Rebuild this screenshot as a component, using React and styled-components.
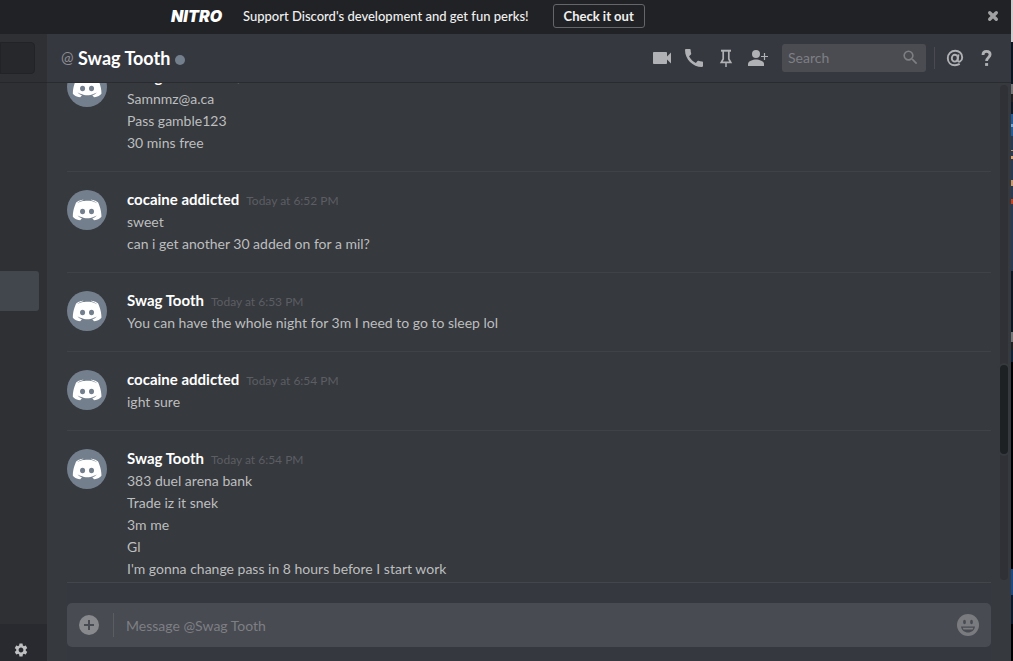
import React from "react";
import styled, { createGlobalStyle } from "styled-components";
import { MdVideocam, MdCall, MdSearch, MdSettings } from "react-icons/md";

const GlobalStyle = createGlobalStyle`
  *, *::before, *::after { box-sizing: border-box; }
  body {
    margin: 0;
    background: #000;
    color: #fff;
    font-family: Lato, "Noto Sans", sans-serif;
    font-size: 14px;
  }
  button, input { font: inherit; color: inherit; }
  h1, h2, p { margin: 0; }
`;

const Screen = styled.div`
  display: grid;
  grid-template-columns: minmax(0, 1fr) 2px;
  height: 100vh;
`;

const AppWindow = styled.div`
  display: flex;
  flex-direction: column;
  min-width: 0;
  min-height: 0;
`;

const DesktopEdge = styled.div`
  background: linear-gradient(
    #cfcfcf 0 42px, #0a1622 42px 84px, #777 84px 94px, #202020 94px 102px,
    #0d1a26 102px 114px, #1f5c9e 114px 124px, #6fa8dc 124px 127px,
    #1f5c9e 127px 136px, #263a54 136px 150px, #c99a6b 150px 151px,
    #263a54 151px 156px, #e0a060 156px 159px, #263a54 159px 180px,
    #c99a6b 180px 186px, #263a54 186px 199px, #c8401c 199px 204px,
    #263a54 204px 271px, #0c1722 271px 332px, #777 332px 342px,
    #202020 342px 350px, #0e2238 350px 362px, #000 362px 569px,
    #164a88 569px 595px, #0a1a2c 595px 624px, #000 624px
  );
`;

const Banner = styled.div`
  display: flex;
  align-items: center;
  flex: none;
  height: 34px;
  padding: 0 12px 2px 171px;
  background: #212225;
  color: #f0f0f0;
  font-size: 13px;
  font-weight: 500;
`;

const NitroMark = styled.span`
  width: 72px;
  font-family: Inter, sans-serif;
  font-size: 16px;
  font-style: italic;
  font-weight: 900;
  color: #fff;
`;

const BannerButton = styled.button`
  height: 24px;
  margin-left: 24px;
  padding: 0 10px;
  border: 1px solid #65666a;
  border-radius: 3px;
  background: none;
  font-weight: 700;
  line-height: 20px;
`;

const IconButton = styled.button`
  display: flex;
  align-items: center;
  justify-content: center;
  flex: none;
  width: ${(p) => p.$size || 24}px;
  height: ${(p) => p.$size || 24}px;
  padding: 0;
  border: 0;
  background: none;
  color: ${(p) => p.$color || "#b0b1b4"};
  cursor: pointer;
  svg { display: block; flex: none; }
`;

const CloseButton = styled(IconButton)`
  margin-left: auto;
  width: 12px;
`;

const Body = styled.div`
  display: flex;
  flex: 1;
  min-height: 0;
`;

const Sidebar = styled.aside`
  display: flex;
  flex-direction: column;
  flex: none;
  width: 47px;
  background: #2f3034;
`;

const SidebarTop = styled.div`
  height: 49px;
  padding-top: 8px;
  border-bottom: 1px solid #26272a;
`;

const FindField = styled.input`
  display: block;
  width: 35px;
  height: 32px;
  border: 1px solid #222327;
  border-radius: 0 4px 4px 0;
  background: #27282c;
`;

const DirectList = styled.nav`
  flex: 1;
  padding-top: 188px;
`;

const DirectLink = styled.a`
  display: block;
  width: 39px;
  height: 40px;
  border-radius: 0 3px 3px 0;
  background: #42464d;
`;

const AccountPanel = styled.div`
  display: flex;
  flex: none;
  height: 37px;
  padding: 14px 0 0 9px;
  background: #292a2f;
`;

const Main = styled.main`
  display: flex;
  flex-direction: column;
  flex: 1;
  min-width: 0;
  background: #36393e;
`;

const Header = styled.header`
  display: flex;
  align-items: center;
  flex: none;
  height: 49px;
  padding: 0 12px 1px 14px;
  background: #363840;
  border-bottom: 1px solid #292b2f;
`;

const AtSign = styled.span`
  width: 17px;
  padding-bottom: 2px;
  color: #8c8d92;
  font-size: 15px;
`;

const Title = styled.h1`
  font-size: 18px;
  font-weight: 700;
  line-height: 24px;
`;

const StatusDot = styled.span`
  width: 10px;
  height: 10px;
  margin: 4px 0 0 5px;
  border-radius: 50%;
  background: #747f8d;
`;

const Tools = styled.div`
  display: flex;
  align-items: center;
  gap: 8px;
  margin-left: auto;
`;

const SearchBox = styled.label`
  display: flex;
  align-items: center;
  width: 144px;
  height: 28px;
  margin-left: 4px;
  padding: 0 6px;
  border-radius: 3px;
  background: #4b4c51;
  color: #7e7f83;
`;

const TextField = styled.input`
  flex: 1;
  min-width: 0;
  padding: 0;
  border: 0;
  outline: 0;
  background: none;
  &::placeholder { color: #7e7f84; opacity: 1; }
`;

const Rule = styled.span`
  flex: none;
  width: 1px;
  height: ${(p) => p.$height}px;
  background: ${(p) => p.$color};
`;

const Conversation = styled.div`
  display: grid;
  grid-template-columns: minmax(0, 1fr) 8px;
  column-gap: 9px;
  flex: 1;
  min-height: 0;
  padding: 0 3px 0 20px;
`;

const MessageList = styled.div`
  display: flex;
  flex-direction: column;
  justify-content: flex-end;
  min-height: 0;
  overflow: hidden;
`;

const Group = styled.article`
  display: flex;
  flex: none;
  gap: 20px;
  padding: 17px 0;
  border-bottom: 1px solid #3f4247;
  &:last-child { padding-bottom: 2px; border-bottom: 0; }
`;

const Avatar = styled.span`
  flex: none;
  width: 40px;
  height: 40px;
  margin-top: 1px;
  border-radius: 50%;
  background: #747f8d;
  svg { display: block; }
`;

const GroupHead = styled.div`
  display: flex;
  align-items: baseline;
  gap: 7px;
  height: 22px;
  line-height: 20px;
`;

const Author = styled.h2`
  font-size: 15px;
  font-weight: 700;
`;

const Timestamp = styled.time`
  color: #5c5e63;
  font-size: 12px;
`;

const Line = styled.p`
  color: #bdbebf;
  line-height: 22px;
`;

const ScrollTrack = styled.div`
  display: flex;
  flex-direction: column;
  margin: 2px 0;
  border-radius: 4px;
  background: #2f3136;
`;

const ScrollSpace = styled.span`
  flex: ${(p) => p.$share};
`;

const ScrollThumb = styled.span`
  flex: 90;
  margin: 0 -2px;
  border: 2px solid #36393e;
  border-radius: 6px;
  background: #1e2124;
`;

const Composer = styled.form`
  flex: none;
  margin: 0 20px;
  padding: 20px 0 14px;
  border-top: 1px solid #43464b;
  background: #363840;
`;

const ComposerBox = styled.div`
  display: flex;
  align-items: center;
  height: 44px;
  padding: 0 12px;
  border-radius: 5px;
  background: #484b52;
`;

const ComposerRule = styled(Rule)`
  margin: 0 12px 0 14px;
`;

const Clyde = () => (
  <Avatar>
    <svg width="40" height="40" viewBox="41 27 163 163" aria-hidden="true">
      <path
        fill="#fff"
        d="M150.9 150.6s-3.6-4.3-6.6-8.1c13.1-3.7 18.1-11.9 18.1-11.9-4.1 2.7-8 4.6-11.5 5.9-5 2.1-9.8 3.5-14.5 4.3-9.6 1.8-18.4 1.3-25.9-.1-5.7-1.1-10.6-2.7-14.7-4.3-2.3-.9-4.8-2-7.3-3.4-.3-.2-.6-.3-.9-.5-.2-.1-.3-.2-.4-.3-1.8-1-2.8-1.7-2.8-1.7s4.8 8 17.5 11.8c-3 3.8-6.7 8.3-6.7 8.3-22.1-.7-30.5-15.2-30.5-15.2 0-32.2 14.4-58.3 14.4-58.3 14.4-10.8 28.1-10.5 28.1-10.5l1 1.2c-18 5.2-26.3 13.1-26.3 13.1s2.2-1.2 5.9-2.9c10.7-4.7 19.2-6 22.7-6.3.6-.1 1.1-.2 1.7-.2 6.1-.8 13-1 20.2-.2 9.5 1.1 19.7 3.9 30.1 9.6 0 0-7.9-7.5-24.9-12.7l1.4-1.6s13.7-.3 28.1 10.5c0 0 14.4 26.1 14.4 58.3 0 0-8.5 14.5-30.6 15.2z"
      />
      <ellipse cx="104.4" cy="115" rx="10.2" ry="11.1" fill="#747f8d" />
      <ellipse cx="140.9" cy="115" rx="10.2" ry="11.1" fill="#747f8d" />
    </svg>
  </Avatar>
);

const PinIcon = () => (
  <svg width="24" height="24" viewBox="0 0 24 24" fill="none" stroke="currentColor">
    <path d="M7 4.700h10" strokeWidth="2" />
    <path d="M9.200 5v8L7.300 16.300h9.400L14.800 13V5" strokeWidth="1.700" />
    <path d="M12 16v5" strokeWidth="1.500" />
  </svg>
);

const AddPersonIcon = () => (
  <svg width="24" height="24" viewBox="0 0 24 24" fill="currentColor">
    <circle cx="10" cy="8" r="4" />
    <path d="M2 20v-2c0-3 5-4.500 8-4.500s8 1.500 8 4.500v2z" />
    <path d="M15 10.500h7M18.500 7v7" stroke="currentColor" strokeWidth="1.200" />
  </svg>
);

const MentionsIcon = () => (
  <svg width="24" height="24" viewBox="0 0 24 24" fill="none" stroke="currentColor" strokeWidth="1.900">
    <ellipse cx="11.800" cy="12.200" rx="3" ry="3.400" />
    <path d="M15.500 8.300l-.8 5.200c-.2 2.200 1.200 2.500 2.400 1.900 1.400-.7 2.100-2.400 2.100-4C19.200 7.300 16 4.800 12.300 4.800 8 4.800 4.800 8 4.800 12.200c0 4.200 3 7 7.200 7 1.700 0 3.300-.4 4.700-1.300" />
  </svg>
);

const HelpIcon = () => (
  <svg width="24" height="24" viewBox="0 0 24 24" fill="none" stroke="currentColor" strokeWidth="2.800">
    <path d="M8 9c0-2.300 1.400-3.600 3.500-3.600s3.600 1.200 3.600 3.200c0 2.900-3.500 2.900-3.500 6.400" />
    <path d="M10.100 18.500h3" />
  </svg>
);

const CloseIcon = () => (
  <svg width="12" height="12" viewBox="0 0 12 12" stroke="currentColor" strokeWidth="3.400" strokeLinecap="round">
    <path d="M2.700 2.700l6.600 6.600M9.300 2.700L2.700 9.300" />
  </svg>
);

const PlusIcon = () => (
  <svg width="20" height="20" viewBox="0 0 20 20">
    <circle cx="10" cy="10" r="10" fill="currentColor" />
    <path d="M10 5v10M5 10h10" stroke="#484b52" strokeWidth="2" />
  </svg>
);

const SmileIcon = () => (
  <svg width="22" height="22" viewBox="0 0 22 22">
    <circle cx="11" cy="11" r="11" fill="currentColor" />
    <ellipse cx="7.500" cy="8" rx="1.400" ry="2.200" fill="#484b52" />
    <ellipse cx="14.500" cy="8" rx="1.400" ry="2.200" fill="#484b52" />
    <path d="M4 12.500h14c-.5 3.700-3.500 6-7 6s-6.500-2.300-7-6z" fill="#484b52" />
    <path d="M5.600 13.700h10.800l-.8 1.800H6.400z" fill="currentColor" />
  </svg>
);

const groups = [
  { author: "Swag Tooth", time: "Today at 6:52 PM", lines: ["Samnmz@a.ca", "Pass gamble123", "30 mins free"] },
  { author: "cocaine addicted", time: "Today at 6:52 PM", lines: ["sweet", "can i get another 30 added on for a mil?"] },
  { author: "Swag Tooth", time: "Today at 6:53 PM", lines: ["You can have the whole night for 3m I need to go to sleep lol"] },
  { author: "cocaine addicted", time: "Today at 6:54 PM", lines: ["ight sure"] },
  {
    author: "Swag Tooth",
    time: "Today at 6:54 PM",
    lines: ["383 duel arena bank", "Trade iz it snek", "3m me", "Gl", "I'm gonna change pass in 8 hours before I start work"],
  },
];

export default function App() {
  return (
    <>
      <GlobalStyle />
      <Screen>
        <AppWindow>
          <Banner>
            <NitroMark>NITRO</NitroMark>
            <span>Support Discord's development and get fun perks!</span>
            <BannerButton type="button">Check it out</BannerButton>
            <CloseButton type="button" aria-label="Close" $color="#a0a1a3">
              <CloseIcon />
            </CloseButton>
          </Banner>
          <Body>
            <Sidebar>
              <SidebarTop>
                <FindField type="text" aria-label="Find a conversation" />
              </SidebarTop>
              <DirectList aria-label="Direct messages">
                <DirectLink href="#swag-tooth" aria-label="Swag Tooth" />
              </DirectList>
              <AccountPanel>
                <IconButton type="button" aria-label="User settings" $color="#c0c1c3">
                  <MdSettings size={16} />
                </IconButton>
              </AccountPanel>
            </Sidebar>
            <Main>
              <Header>
                <AtSign>@</AtSign>
                <Title>Swag Tooth</Title>
                <StatusDot />
                <Tools>
                  <IconButton type="button" aria-label="Start video call">
                    <MdVideocam size={24} />
                  </IconButton>
                  <IconButton type="button" aria-label="Start voice call">
                    <MdCall size={24} />
                  </IconButton>
                  <IconButton type="button" aria-label="Pinned messages">
                    <PinIcon />
                  </IconButton>
                  <IconButton type="button" aria-label="Add friends to DM">
                    <AddPersonIcon />
                  </IconButton>
                  <SearchBox>
                    <TextField type="text" placeholder="Search" aria-label="Search" />
                    <MdSearch size={19} />
                  </SearchBox>
                  <Rule $height={22} $color="#494b51" />
                  <IconButton type="button" aria-label="Mentions">
                    <MentionsIcon />
                  </IconButton>
                  <IconButton type="button" aria-label="Help">
                    <HelpIcon />
                  </IconButton>
                </Tools>
              </Header>
              <Conversation>
                <MessageList>
                  {groups.map((g, i) => (
                    <Group key={i}>
                      <Clyde />
                      <div>
                        <GroupHead>
                          <Author>{g.author}</Author>
                          <Timestamp>{g.time}</Timestamp>
                        </GroupHead>
                        {g.lines.map((line) => (
                          <Line key={line}>{line}</Line>
                        ))}
                      </div>
                    </Group>
                  ))}
                </MessageList>
                <ScrollTrack aria-hidden="true">
                  <ScrollSpace $share={280} />
                  <ScrollThumb />
                  <ScrollSpace $share={125} />
                </ScrollTrack>
              </Conversation>
              <Composer onSubmit={(e) => e.preventDefault()}>
                <ComposerBox>
                  <IconButton type="button" aria-label="Upload a file" $size={20} $color="#88898d">
                    <PlusIcon />
                  </IconButton>
                  <ComposerRule $height={24} $color="#5b5d63" />
                  <TextField type="text" placeholder="Message @Swag Tooth" aria-label="Message @Swag Tooth" />
                  <IconButton type="button" aria-label="Select emoji" $size={22} $color="#797b7f">
                    <SmileIcon />
                  </IconButton>
                </ComposerBox>
              </Composer>
            </Main>
          </Body>
        </AppWindow>
        <DesktopEdge />
      </Screen>
    </>
  );
}
